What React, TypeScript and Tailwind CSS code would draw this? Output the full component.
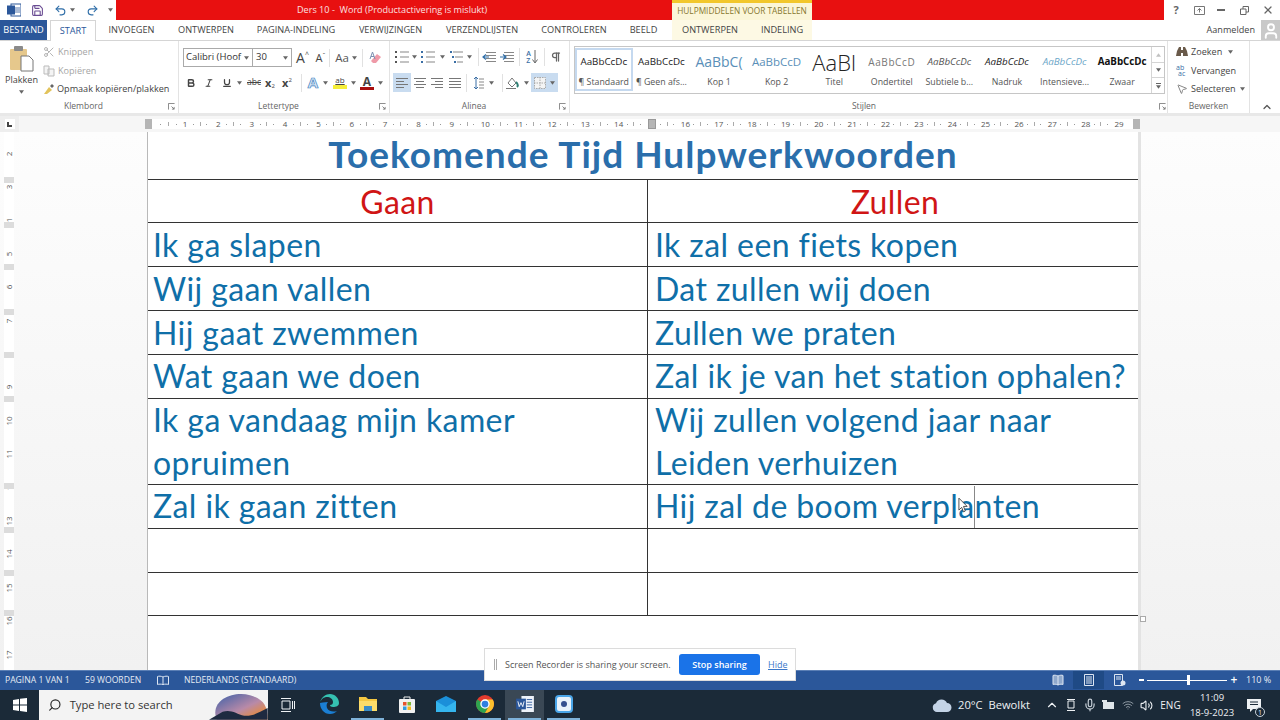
import {
  Bold,
  ChevronUp,
  Italic,
  Mic,
  MousePointer2,
  Pilcrow,
  Redo2,
  Save,
  Scissors,
  Search,
  Undo2,
  Underline,
  User,
  Volume2,
  Wifi,
  X,
} from "lucide-react";
import { ReactNode } from "react";

const ui = "font-['Open_Sans',sans-serif]";

const Caret = ({ className = "" }: { className?: string }) => (
  <svg viewBox="0 0 6 4" className={`w-[5px] h-[4px] shrink-0 ${className}`}>
    <path d="M0 0h6L3 4z" fill="#666" />
  </svg>
);

const Launcher = () => (
  <svg viewBox="0 0 8 8" className="w-[7px] h-[7px]">
    <path d="M.5 7.5v-7h7M4 4l3 3M7 4.5V7H4.5" fill="none" stroke="#777" strokeWidth="1" />
  </svg>
);

const Lines = ({ kind }: { kind: "left" | "center" | "right" | "full" }) => {
  const rows = [12, 8, 12, 8];
  return (
    <svg viewBox="0 0 12 10" className="w-[12px] h-[10px]">
      {rows.map((w, i) => {
        const len = kind === "full" ? 12 : w;
        const x = kind === "left" || kind === "full" ? 0 : kind === "right" ? 12 - len : (12 - len) / 2;
        return <rect key={i} x={x} y={i * 3} width={len} height="1" fill="#777" />;
      })}
    </svg>
  );
};

const ListIcon = ({ marks }: { marks: "dot" | "num" | "multi" }) => (
  <svg viewBox="0 0 14 12" className="w-[14px] h-[12px]">
    {[0, 5, 10].map((y, i) => (
      <g key={y}>
        <rect x={marks === "multi" ? 1 + i * 2 : 0} y={y} width="2" height="2" fill={marks === "dot" ? "#555" : "#3a6ea5"} />
        <rect x={marks === "multi" ? 4 + i * 2 : 5} y={y + 0.5} width={marks === "multi" ? 10 - i * 2 : 9} height="1" fill="#888" />
      </g>
    ))}
  </svg>
);

const IndentIcon = ({ flip }: { flip?: boolean }) => (
  <svg viewBox="0 0 14 12" className="w-[14px] h-[12px]">
    {[1, 4, 7, 10].map((y) => (
      <rect key={y} x="4" y={y} width="10" height="1" fill="#888" />
    ))}
    <path d={flip ? "M0 6h6M3 3.5 6 6 3 8.5" : "M1 6h6M4 3.5 1 6l3 2.5"} fill="none" stroke="#2f6ea8" strokeWidth="1.2" />
  </svg>
);

const Sep = ({ h = "h-[18px]" }: { h?: string }) => <div className={`w-px shrink-0 ${h} bg-[#e1e1e1]`} />;

const Cell = ({ w, children, className = "" }: { w: string; children?: ReactNode; className?: string }) => (
  <div className={`${w} h-full flex items-center justify-center shrink-0 ${className}`}>{children}</div>
);

const GroupLabel = ({ label, launcher = true, pad }: { label: string; launcher?: boolean; pad: string }) => (
  <div className={`h-[13px] flex items-center justify-between ${pad} text-[8.5px] text-[#666]`}>
    <span className={`flex-1 text-center ${launcher ? "pr-[5px]" : ""}`}>{label}</span>
    {launcher && <Launcher />}
  </div>
);

const Klembord = () => (
  <div className="w-[179px] border-r border-[#e3e3e3] flex flex-col shrink-0">
    <div className="h-[59px] flex">
      <div className="w-[43px] flex flex-col items-center pt-[5px]">
        <svg viewBox="0 0 24 26" className="w-[24px] h-[26px]">
          <rect x="0" y="3" width="17" height="21" rx="1" fill="#e6c88c" />
          <rect x="4" y="0" width="9" height="5" rx="1" fill="#8a8a8a" />
          <path d="M11 10h8l4 4v11H11z" fill="#fff" stroke="#777" />
        </svg>
        <span className="text-[9.1px] text-[#444] mt-[1px] leading-[14px]">Plakken</span>
        <Caret className="mt-[3px]" />
      </div>
      <div className="flex flex-col pt-[2px] text-[9.1px] leading-[18px] whitespace-nowrap">
        <div className="h-[18.5px] flex items-center gap-[3px] text-[#a5a5a5]">
          <Scissors size={12} color="#b5b5b5" />
          Knippen
        </div>
        <div className="h-[18.5px] flex items-center gap-[3px] text-[#a5a5a5]">
          <svg viewBox="0 0 12 12" className="w-[12px] h-[12px]">
            <path d="M1 1h5v8H1zM5 4h6v7H5z" fill="#f4f4f4" stroke="#bbb" />
          </svg>
          Kopiëren
        </div>
        <div className="h-[18.5px] flex items-center gap-[2px] text-[#444]">
          <svg viewBox="0 0 12 12" className="w-[12px] h-[12px]">
            <path d="M1 11 6 4l3 3-5 4z" fill="#e2c35b" />
            <path d="m7 3 2-2 2 2-2 2z" fill="#666" />
          </svg>
          Opmaak kopiëren/plakken
        </div>
      </div>
    </div>
    <GroupLabel label="Klembord" pad="pl-[4px] pr-[3px]" />
  </div>
);

const Lettertype = () => (
  <div className="w-[211px] border-r border-[#e3e3e3] flex flex-col shrink-0">
    <div className="h-[32px] pl-[4px] pt-[1px] flex items-center">
      <div className="w-[109px] h-[19px] border border-[#aaa] flex items-center text-[9.5px] text-[#333] shrink-0">
        <div className="w-[69px] h-full border-r border-[#aaa] flex items-center pl-[2px] gap-[2px] whitespace-nowrap">
          <span className="w-[56px]">Calibri (Hoof</span>
          <Caret />
        </div>
        <div className="flex-1 flex items-center justify-between px-[3px]">
          30
          <Caret />
        </div>
      </div>
      <Cell w="w-[19px]" className="ml-[1px] text-[14px] text-[#444] leading-none">
        A<span className="text-[7px] -mt-[6px]">^</span>
      </Cell>
      <Cell w="w-[17px]" className="text-[11px] text-[#444] leading-none">
        A<span className="text-[7px] -mt-[5px]">ˇ</span>
      </Cell>
      <Sep />
      <Cell w="w-[32px]" className="text-[11.5px] text-[#555] gap-[3px]">
        Aa
        <Caret />
      </Cell>
      <Sep />
      <Cell w="w-[26px]">
        <svg viewBox="0 0 14 14" className="w-[14px] h-[14px]">
          <path d="M2 10 8 3l4 3-5 6H4z" fill="#ef9aa8" />
          <path d="M1 8 3.500 1 6 8M2 5.500h3" fill="none" stroke="#7a8fb0" />
        </svg>
      </Cell>
    </div>
    <div className="h-[19px] pl-[4px] flex items-center text-[#444]">
      <Cell w="w-[15px]"><Bold size={10} strokeWidth={3.5} /></Cell>
      <Cell w="w-[19px]" className="ml-[1px]"><Italic size={10} strokeWidth={2.5} /></Cell>
      <Cell w="w-[17px]"><Underline size={10} strokeWidth={3} /></Cell>
      <Cell w="w-[8px]"><Caret /></Cell>
      <Cell w="w-[22px]" className="text-[8.5px] line-through">abc</Cell>
      <Cell w="w-[10px]" className="text-[11px] font-bold leading-none">
        x<span className="text-[6px] font-normal mt-[6px]">2</span>
      </Cell>
      <Cell w="w-[24px]" className="text-[11px] font-bold leading-none">
        x<span className="text-[6px] font-normal -mt-[6px]">2</span>
      </Cell>
      <Cell w="w-[2px]" />
      <Sep />
      <Cell w="w-[22px]" className="text-[15px] font-bold text-[#d8e8f5] [-webkit-text-stroke:0.7px_#3a7ebf]">A</Cell>
      <Cell w="w-[2px]"><Caret /></Cell>
      <Cell w="w-[26px]" className="ml-[1px] flex-col text-[8px] leading-[8px]">
        <span className="underline">ab</span>
        <span className="w-[14px] h-[4px] bg-[#f5ee3a] mt-[1px]" />
      </Cell>
      <Cell w="w-[1px]"><Caret /></Cell>
      <Cell w="w-[26px]" className="flex-col text-[12px] leading-[11px] font-bold">
        A
        <span className="w-[14px] h-[3px] bg-[#a80f0f]" />
      </Cell>
      <Cell w="w-[1px]"><Caret /></Cell>
    </div>
    <div className="h-[8px]" />
    <GroupLabel label="Lettertype" pad="pl-[4px] pr-[3px]" />
  </div>
);

const Alinea = () => (
  <div className="w-[180px] border-r border-[#e3e3e3] flex flex-col shrink-0">
    <div className="h-[32px] pl-[4px] flex items-center">
      <Cell w="w-[16px]"><ListIcon marks="dot" /></Cell>
      <Cell w="w-[8px]"><Caret /></Cell>
      <Cell w="w-[20px]"><ListIcon marks="num" /></Cell>
      <Cell w="w-[8px]"><Caret /></Cell>
      <Cell w="w-[20px]"><ListIcon marks="multi" /></Cell>
      <Cell w="w-[6px]"><Caret /></Cell>
      <Cell w="w-[6px]" />
      <Sep />
      <Cell w="w-[20px]"><IndentIcon /></Cell>
      <Cell w="w-[16px]"><IndentIcon flip /></Cell>
      <Cell w="w-[4px]" />
      <Sep />
      <Cell w="w-[24px]" className="gap-[1px]">
        <span className="flex flex-col text-[7px] leading-[7px] text-[#3a6ea5] font-semibold">
          <span>A</span>
          <span>Z</span>
        </span>
        <svg viewBox="0 0 6 14" className="w-[6px] h-[14px]">
          <path d="M3 0v12M.5 9.5 3 13l2.5-3.5" fill="none" stroke="#666" />
        </svg>
      </Cell>
      <Sep />
      <Cell w="w-[22px]"><Pilcrow size={12} strokeWidth={2.5} color="#666" /></Cell>
    </div>
    <div className="h-[19px] pl-[3px] flex items-center">
      <Cell w="w-[18px]" className="bg-[#c9dcf0]"><Lines kind="left" /></Cell>
      <Cell w="w-[17px]"><Lines kind="center" /></Cell>
      <Cell w="w-[18px]"><Lines kind="right" /></Cell>
      <Cell w="w-[17px]"><Lines kind="full" /></Cell>
      <Cell w="w-[3px]" />
      <Sep />
      <Cell w="w-[24px]">
        <svg viewBox="0 0 10 12" className="w-[10px] h-[12px]">
          <path d="M2 0v12M0 2l2-2 2 2M0 10l2 2 2-2" fill="none" stroke="#3a6ea5" />
          <path d="M5 2h5M5 5h5M5 8h5M5 11h5" stroke="#888" />
        </svg>
      </Cell>
      <Cell w="w-[1px]"><Caret /></Cell>
      <Cell w="w-[10px]" />
      <Sep />
      <Cell w="w-[18px]">
        <svg viewBox="0 0 14 14" className="w-[14px] h-[14px]">
          <path d="M3 7 7 2l4 5-4 4z" fill="#fff" stroke="#777" />
          <path d="M11 6c2 2 2 4 1 5" fill="none" stroke="#2f7f74" strokeWidth="2" />
          <rect x="1" y="12" width="10" height="1" fill="#777" />
        </svg>
      </Cell>
      <Cell w="w-[10px]"><Caret /></Cell>
      <Cell w="w-[27px]" className="bg-[#c9dcf0] gap-[4px]">
        <svg viewBox="0 0 12 12" className="w-[12px] h-[12px]">
          <rect x="0.5" y="0.5" width="11" height="11" fill="#f4f4f4" stroke="#aaa" strokeDasharray="1.5 1" />
          <path d="M6 0v12M0 6h12" stroke="#aaa" strokeDasharray="1.5 1" />
        </svg>
        <Caret />
      </Cell>
    </div>
    <div className="h-[8px]" />
    <GroupLabel label="Alinea" pad="pl-[4px] pr-[3px]" />
  </div>
);

const styles = [
  { sample: "AaBbCcDc", label: "¶ Standaard", cls: "text-[9.8px] text-[#222]" },
  { sample: "AaBbCcDc", label: "¶ Geen afs...", cls: "text-[9.8px] text-[#222]" },
  { sample: "AaBbC(", label: "Kop 1", cls: "text-[14px] text-[#5a8fb8]" },
  { sample: "AaBbCcD", label: "Kop 2", cls: "text-[11.5px] text-[#5a8fb8]" },
  { sample: "AaBl", label: "Titel", cls: "text-[22px] text-[#222] font-light" },
  { sample: "AaBbCcD", label: "Ondertitel", cls: "text-[10px] text-[#777] tracking-[0.6px]" },
  { sample: "AaBbCcDc", label: "Subtiele b...", cls: "text-[9.8px] text-[#555] italic" },
  { sample: "AaBbCcDc", label: "Nadruk", cls: "text-[9.8px] text-[#222] italic" },
  { sample: "AaBbCcDc", label: "Intensieve...", cls: "text-[9.8px] text-[#6ca6c8] italic" },
  { sample: "AaBbCcDc", label: "Zwaar", cls: "text-[9.8px] text-[#111] font-bold" },
];

const Stijlen = () => (
  <div className="w-[598px] pl-[4px] border-r border-[#e3e3e3] flex flex-col shrink-0">
    <div className="h-[59px] pt-[5px]">
      <div className="w-[591px] h-[48px] border border-[#c6c6c6] flex">
        <div className="flex-1 flex pt-[1px]">
          {styles.map((s, i) => (
            <div
              key={i}
              className={`w-[57.6px] h-[43px] flex flex-col items-center shrink-0 ${
                i === 0 ? "border-[2px] border-[#c5d9ef]" : "border-[2px] border-transparent"
              }`}
            >
              <div className={`h-[25px] leading-[24px] w-full text-center whitespace-nowrap ${s.cls}`}>{s.sample}</div>
              <div className="h-[14px] text-[8.8px] leading-[14px] text-[#555] whitespace-nowrap">{s.label}</div>
            </div>
          ))}
        </div>
        <div className="w-[13px] border-l border-[#d5d5d5] flex flex-col">
          <div className="h-[16px] border-b border-[#d5d5d5] flex items-center justify-center">
            <Caret className="rotate-180 opacity-40" />
          </div>
          <div className="h-[15px] border-b border-[#d5d5d5] flex items-center justify-center">
            <Caret />
          </div>
          <div className="flex-1 flex flex-col items-center justify-center gap-[1px]">
            <div className="w-[5px] h-px bg-[#666]" />
            <Caret />
          </div>
        </div>
      </div>
    </div>
    <GroupLabel label="Stijlen" pad="pl-0 pr-[1px]" />
  </div>
);

const Bewerken = () => (
  <div className="w-[82px] border-r border-[#e3e3e3] flex flex-col shrink-0">
    <div className="h-[59px] pl-[8px] flex flex-col text-[9.1px] text-[#444] pt-[2px] whitespace-nowrap">
      <div className="h-[18.5px] flex items-center gap-[3px]">
        <svg viewBox="0 0 12 12" className="w-[12px] h-[12px]">
          <path d="M1 5 3 1h2v9H0zM11 5 9 1H7v9h5zM5 4h2v3H5z" fill="#6a5a4a" />
        </svg>
        Zoeken
        <Caret className="ml-[3px]" />
      </div>
      <div className="h-[18.5px] flex items-center gap-[3px]">
        <span className="w-[12px] flex flex-col text-[7px] leading-[6px] text-[#3a6ea5]">
          <span>ab</span>
          <span className="pl-[2px]">ac</span>
        </span>
        Vervangen
      </div>
      <div className="h-[18.5px] flex items-center gap-[3px]">
        <MousePointer2 size={12} color="#888" />
        Selecteren
        <Caret className="ml-[1px]" />
      </div>
    </div>
    <GroupLabel label="Bewerken" launcher={false} pad="px-[2px]" />
  </div>
);

const TitleBar = () => (
  <div className="h-[20px] flex shrink-0">
    <div className="w-[116px] flex items-center bg-white">
      <Cell w="w-[28px]">
        <svg viewBox="0 0 14 14" className="w-[14px] h-[14px]">
          <rect x="4" y="1" width="10" height="12" fill="#fff" stroke="#2b579a" />
          <rect x="0" y="2.5" width="8" height="9" fill="#2b579a" />
          <path d="M6 5h7M6 7h7M6 9h7" stroke="#2b579a" strokeWidth="0.8" />
        </svg>
      </Cell>
      <Cell w="w-[18px]"><Save size={13} color="#6a4c93" /></Cell>
      <Cell w="w-[16px]" className="ml-[6px]"><Undo2 size={13} color="#2f6ea8" /></Cell>
      <Cell w="w-[8px]"><Caret /></Cell>
      <Cell w="w-[24px]" className="ml-[4px]"><Redo2 size={13} color="#2f6ea8" /></Cell>
      <Cell w="w-[12px]"><Caret /></Cell>
    </div>
    <div className="w-[556px] bg-[#e81010] flex items-center pl-[181px] text-[9.1px] text-[#fbe0e0] whitespace-pre">
      Ders 10 -  Word (Productactivering is mislukt)
    </div>
    <div className="w-[140px] bg-[#fbf6d8] border-t-[3px] border-[#f2c72c] flex items-center justify-center text-[8.3px] text-[#86762f] whitespace-nowrap">
      HULPMIDDELEN VOOR TABELLEN
    </div>
    <div className="w-[352px] bg-[#e81010]" />
    <div className="flex-1 bg-white flex items-center text-[#666]">
      <Cell w="w-[24px]" className="text-[11px] font-bold">?</Cell>
      <Cell w="w-[22px]">
        <svg viewBox="0 0 11 9" className="w-[11px] h-[9px]">
          <path d="M.5.5h10v8H.5zM5.5 6.5v-4M3.5 4.5l2-2 2 2" fill="none" stroke="#777" />
        </svg>
      </Cell>
      <Cell w="w-[22px]"><div className="w-[8px] h-[2px] bg-[#666]" /></Cell>
      <Cell w="w-[25px]">
        <svg viewBox="0 0 9 9" className="w-[9px] h-[9px]">
          <path d="M.5 3h5.5v5.5H.5zM3 3V.5h5.5V6H6" fill="none" stroke="#666" />
        </svg>
      </Cell>
      <Cell w="w-[22px]"><X size={12} strokeWidth={2.5} /></Cell>
    </div>
  </div>
);

const tabs = [
  ["INVOEGEN", "w-[71px]"],
  ["ONTWERPEN", "w-[78px]"],
  ["PAGINA-INDELING", "w-[102px]"],
  ["VERWIJZINGEN", "w-[87px]"],
  ["VERZENDLIJSTEN", "w-[96px]"],
  ["CONTROLEREN", "w-[88px]"],
  ["BEELD", "w-[51px]"],
];

const TabBar = () => (
  <div className="h-[21px] flex shrink-0 border-b border-[#d5d5d5] text-[9.2px] text-[#444] whitespace-nowrap">
    <div className="w-[47px] h-[20px] bg-[#2b579a] text-white flex items-center justify-center">BESTAND</div>
    <div className="w-[46px] ml-[3px] h-[21px] bg-white border-x border-t border-[#d5d5d5] flex items-center justify-center text-[#2b579a]">
      START
    </div>
    {tabs.map(([t, w]) => (
      <div key={t} className={`${w} flex items-center justify-center`}>
        {t}
      </div>
    ))}
    <div className="w-[140px] ml-[3px] bg-[#fdf9e4] flex items-center pl-[10px] gap-[23px]">
      <span>ONTWERPEN</span>
      <span>INDELING</span>
    </div>
    <div className="flex-1 flex items-center justify-end">
      <span className="text-[9.1px] mr-[6px]">Aanmelden</span>
      <div className="w-[19px] h-[20px] bg-[#c9c9c9] flex items-end justify-center overflow-hidden">
        <User size={18} color="#fff" strokeWidth={2.5} />
      </div>
    </div>
  </div>
);

const HTicks = () => (
  <>
    <span className="w-px h-px bg-[#999]" />
    <span className="w-px h-[4px] bg-[#aaa]" />
    <span className="w-px h-px bg-[#999]" />
  </>
);

const hNums = Array.from({ length: 29 }, (_, i) => i + 1);

const TopRuler = () => (
  <div className="h-[16px] flex items-center bg-[#f6f6f6] shrink-0 text-[8px] text-[#555]">
    <div className="w-[19px] h-[16px] flex items-center justify-center bg-[#eeeeee]">
      <div className="w-[10px] h-[10px] bg-white flex items-center justify-center">
        <div className="w-[5px] h-[5px] border-l-2 border-b-2 border-[#444]" />
      </div>
    </div>
    <div className="w-[126px]" />
    <div className="w-[7px] h-[10px] bg-[#b5b5b5]" />
    <div className="w-[981px] h-[10px] bg-white flex items-center">
      <div className="w-[28px] shrink-0 flex items-center justify-around pl-[4px]">
        <HTicks />
      </div>
      {hNums.map((n) => (
        <div key={n} className="w-[33.36px] shrink-0 flex items-center">
          {n === 15 ? (
            <span className="w-[10px] flex justify-center">
              <span className="w-[8px] h-[10px] bg-[#b5b5b5] border border-[#999]" />
            </span>
          ) : (
            <span className="w-[10px] text-center">{n}</span>
          )}
          {n < 29 && (
            <span className="flex-1 flex items-center justify-around pr-[3px]">
              <HTicks />
            </span>
          )}
        </div>
      ))}
    </div>
    <div className="w-[7px] h-[10px] bg-[#b5b5b5]" />
  </div>
);

const vNums = ["2", "3", "1", "5", "6", "7", "", "9", "10", "11", "1", "13", "14", "15", "16", "17"];
const rowBands = [45, 90, 132, 177, 220, 264, 351, 395, 438, 478];

const SideRuler = () => (
  <div className="relative w-[19px] shrink-0 pl-[4px] h-full">
    <div className="w-[10px] h-full bg-white flex flex-col items-center overflow-hidden text-[8px] text-[#555]">
      <div className="h-[5px] shrink-0" />
      {vNums.map((n, i) => (
        <div key={i} className="h-[33.4px] shrink-0 flex items-center justify-center">
          <span className="-rotate-90">{n}</span>
        </div>
      ))}
    </div>
    {rowBands.map((t) => (
      <div key={t} className="absolute left-[4px] w-[10px] h-[6px] bg-[#dcdcdc]" style={{ top: t }} />
    ))}
  </div>
);

const Row = ({
  h,
  left,
  right,
  center,
  tight,
  color = "text-[#0f6fa8]",
}: {
  h: string;
  left?: ReactNode;
  right?: ReactNode;
  center?: boolean;
  tight?: boolean;
  color?: string;
}) => (
  <div
    className={`${h} flex border-b border-[#333] ${color} text-[32px] ${
      tight ? "leading-[42.5px]" : "leading-[43.5px]"
    } tracking-[0.4px] whitespace-nowrap shrink-0`}
  >
    <div className={`w-[500px] border-r border-[#333] ${center ? "text-center" : "pl-[5px]"}`}>{left}</div>
    <div className={`flex-1 ${center ? "text-center pl-[4px]" : "pl-[7px]"}`}>{right}</div>
  </div>
);

const Page = () => (
  <div className="w-[991px] h-full bg-white border-l border-[#b9b9b9] font-['Lato',sans-serif] overflow-hidden shrink-0">
    <div className="h-[48px] pb-[2px] leading-[44px] border-b border-[#333] text-center text-[37px] font-bold text-[#2a6eab] tracking-[1px] whitespace-nowrap shrink-0">
      Toekomende Tijd Hulpwerkwoorden
    </div>
    <Row h="h-[43px]" center color="text-[#d01515]" left="Gaan" right="Zullen" />
    <Row h="h-[44px]" left="Ik ga slapen" right="Ik zal een fiets kopen" />
    <Row h="h-[44px]" left="Wij gaan vallen" right="Dat zullen wij doen" />
    <Row h="h-[44px]" left="Hij gaat zwemmen" right="Zullen we praten" />
    <Row h="h-[44px]" tight left="Wat gaan we doen" right="Zal ik je van het station ophalen?" />
    <Row
      h="h-[86px]"
      tight
      left={
        <>
          Ik ga vandaag mijn kamer
          <br />
          opruimen
        </>
      }
      right={
        <>
          Wij zullen volgend jaar naar
          <br />
          Leiden verhuizen
        </>
      }
    />
    <Row h="h-[44px]" tight left="Zal ik gaan zitten" right="Hij zal de boom verplanten" />
    <Row h="h-[44px]" />
    <Row h="h-[43px]" />
  </div>
);

const RecorderBar = () => (
  <div className={`absolute left-[484px] top-[648px] w-[312px] h-[33px] bg-white border border-[#dcdcdc] flex items-center pl-[9px] text-[9px] text-[#555] ${ui}`}>
    <span className="w-[3px] h-[11px] border-x border-[#aaa]" />
    <span className="ml-[8px] w-[166px] whitespace-nowrap">Screen Recorder is sharing your screen.</span>
    <div className="ml-[8px] w-[81px] h-[21px] bg-[#1a73e8] rounded-[3px] text-white font-semibold flex items-center justify-center">
      Stop sharing
    </div>
    <span className="ml-[8px] text-[#3b78c9] underline">Hide</span>
  </div>
);

const StatusBar = () => (
  <div className="h-[20px] pb-px bg-[#2b579a] border-t border-[#5b7fb5] flex items-center text-[8.6px] text-[#e6ecf5] shrink-0 whitespace-nowrap">
    <span className="ml-[5px] w-[80px]">PAGINA 1 VAN 1</span>
    <span className="w-[72px]">59 WOORDEN</span>
    <svg viewBox="0 0 12 10" className="w-[12px] h-[10px]">
      <path d="M6 2C4 1 2 1 .5 1.5v8C2 9 4 9 6 9.5 8 9 10 9 11.5 9.5v-8C10 1 8 1 6 2zM6 2v7.5" fill="none" stroke="#dde6f2" />
    </svg>
    <span className="ml-[15px]">NEDERLANDS (STANDAARD)</span>
    <div className="flex-1" />
    <Cell w="w-[31px]">
      <svg viewBox="0 0 12 12" className="w-[12px] h-[12px]">
        <path d="M6 2C4 1 2 1 1 1.5v9c1-.5 3-.5 5 .5 2-1 4-1 5-.5v-9C10 1 8 1 6 2zM6 2v9" fill="#8fa8cc" stroke="#dde6f2" />
      </svg>
    </Cell>
    <Cell w="w-[31px]" className="bg-[#1f4a85]">
      <svg viewBox="0 0 10 12" className="w-[10px] h-[12px]">
        <path d="M.5.5h9v11h-9zM2 3h6M2 5h6M2 7h6M2 9h6" fill="none" stroke="#dde6f2" />
      </svg>
    </Cell>
    <Cell w="w-[31px]">
      <svg viewBox="0 0 12 12" className="w-[12px] h-[12px]">
        <path d="M.5.5h8v11h-8zM2 3h5M2 5h5" fill="none" stroke="#dde6f2" />
        <circle cx="9" cy="9" r="2.5" fill="#dde6f2" />
      </svg>
    </Cell>
    <span className="w-[5px] h-[2px] bg-white ml-[4px]" />
    <div className="w-[80px] mx-[3px] h-px bg-white flex items-center pl-[40px]">
      <span className="w-[3px] h-[10px] bg-white" />
    </div>
    <span className="text-[12px] font-semibold text-white w-[8px] text-center">+</span>
    <span className="ml-[8px] w-[34px] text-[9px]">110 %</span>
  </div>
);

const TaskIcon = ({ active, under, className = "", children }: { active?: boolean; under?: boolean; className?: string; children: ReactNode }) => (
  <div className={`w-[39px] h-[30px] flex flex-col items-center shrink-0 ${active ? "bg-[#3a4855]" : ""} ${className}`}>
    <div className="flex-1 flex items-center justify-center">{children}</div>
    <div className={`w-[33px] h-[2px] ${under ? "bg-[#7fb2d9]" : ""}`} />
  </div>
);

const Taskbar = () => (
  <div className="h-[30px] bg-[#1b2a38] flex items-center shrink-0 text-[#eef1f4] whitespace-nowrap">
    <Cell w="w-[39px]">
      <svg viewBox="0 0 14 14" className="w-[14px] h-[14px]">
        <path d="M0 2l6-1v5.500H0zM7 .8 14 0v6.500H7zM0 7.500h6V13l-6-1zM7 7.500h7V14l-7-1z" fill="#fff" />
      </svg>
    </Cell>
    <div className="w-[229px] h-[30px] bg-[#f3f3f3] flex items-center pl-[9px] text-[11.2px] text-[#333]">
      <Search size={14} color="#222" className="-scale-x-100" />
      <span className="ml-[8px] w-[143px]">Type here to search</span>
      <svg viewBox="0 0 60 30" className="w-[60px] h-[30px]">
        <defs>
          <linearGradient id="dusk" x1="0" x2="1" y1="0" y2="1">
            <stop offset="0" stopColor="#3a5fa8" />
            <stop offset="0.55" stopColor="#b88aa8" />
            <stop offset="0.8" stopColor="#e08a4a" />
          </linearGradient>
        </defs>
        <path d="M8 30C0 10 25 0 42 5 55 9 60 15 60 30z" fill="url(#dusk)" />
        <path d="M0 30 14 22c8-3 14 2 22 4 8 1 16-4 24-8v12z" fill="#1e2a40" />
      </svg>
    </div>
    <Cell w="w-[39px]">
      <svg viewBox="0 0 14 14" className="w-[14px] h-[14px]">
        <path d="M1 3h8v8H1zM0 .5h10M0 13.500h10M11.500 3v8M13.500 3v8" fill="none" stroke="#eef1f4" />
      </svg>
    </Cell>
    <div className="w-[2px]" />
    <TaskIcon>
      <svg viewBox="0 0 20 20" className="w-[20px] h-[20px]">
        <path d="M1 9C2 3 7 0 11 0c5 0 9 4 9 9 0 3-3 4-6 4-2 0-3-1-3-2 2 0 3-1 3-3 0-3-3-5-6-5S2 5 1 9z" fill="#35c1b1" />
        <path d="M1 9c0 6 4 11 10 11 3 0 5-1 7-3-3 1-8 1-10-3-1-3 0-5 1-6-4 0-7 1-8 1z" fill="#1b7fd4" />
      </svg>
    </TaskIcon>
    <TaskIcon under>
      <svg viewBox="0 0 18 16" className="w-[18px] h-[16px]">
        <path d="M0 1h7l2 2h9v12H0z" fill="#f5c842" />
        <rect x="0" y="5" width="18" height="10" fill="#fcdc6a" />
        <rect x="5" y="10" width="8" height="5" fill="#3a8cc8" />
      </svg>
    </TaskIcon>
    <TaskIcon>
      <svg viewBox="0 0 16 18" className="w-[16px] h-[18px]">
        <path d="M5 4V2h6v2" fill="none" stroke="#eee" />
        <rect x="0" y="4" width="16" height="14" rx="1" fill="#f1f1f1" />
        <rect x="4" y="7" width="3.500" height="3.500" fill="#e5532d" />
        <rect x="8.500" y="7" width="3.500" height="3.500" fill="#7db93a" />
        <rect x="4" y="11.500" width="3.500" height="3.500" fill="#2f9be0" />
        <rect x="8.500" y="11.500" width="3.500" height="3.500" fill="#f5b91f" />
      </svg>
    </TaskIcon>
    <TaskIcon>
      <svg viewBox="0 0 20 16" className="w-[20px] h-[16px]">
        <path d="M0 5 10 0l10 5v11H0z" fill="#1b8fd9" />
        <path d="M0 5l10 6 10-6v11H0z" fill="#35b5ee" />
      </svg>
    </TaskIcon>
    <TaskIcon under>
      <svg viewBox="0 0 20 20" className="w-[18px] h-[18px]">
        <circle cx="10" cy="10" r="10" fill="#e33b2e" />
        <path d="M10 10 1.340 5A10 10 0 0 0 10 20l5-8.660z" fill="#2ea44f" />
        <path d="M10 5h8.660A10 10 0 0 1 10 20l5-8.660z" fill="#fbc02d" />
        <circle cx="10" cy="10" r="4.500" fill="#2f7fe0" stroke="#fff" strokeWidth="1.500" />
      </svg>
    </TaskIcon>
    <TaskIcon active under className="ml-[1px]">
      <svg viewBox="0 0 20 18" className="w-[18px] h-[16px]">
        <rect x="6" y="0" width="14" height="18" fill="#eef3fa" />
        <path d="M12 4h6M12 7h6M12 10h6M12 13h6" stroke="#2b579a" />
        <rect x="0" y="3" width="11" height="12" fill="#2b579a" />
        <path d="m2 6 1.500 6 2-4.500 2 4.500L9 6" fill="none" stroke="#fff" />
      </svg>
    </TaskIcon>
    <TaskIcon under>
      <svg viewBox="0 0 18 18" className="w-[18px] h-[18px]">
        <rect x="1" y="1" width="16" height="16" rx="3" fill="#e8f2fb" stroke="#4aa5e8" strokeWidth="2" />
        <circle cx="9" cy="9" r="3" fill="#34508f" />
      </svg>
    </TaskIcon>
    <div className="flex-1" />
    <svg viewBox="0 0 20 14" className="w-[20px] h-[14px]">
      <path d="M5 14a4.500 4.500 0 0 1-1-8.800A6 6 0 0 1 15 5a4.500 4.500 0 0 1 0 9z" fill="#c3d3e6" />
    </svg>
    <span className="ml-[6px] w-[87px] text-[11.2px]">20°C&nbsp; Bewolkt</span>
    <Cell w="w-[14px]"><ChevronUp size={14} /></Cell>
    <Cell w="w-[24px]">
      <svg viewBox="0 0 10 14" className="w-[10px] h-[14px]">
        <path d="M2 3h6v7H2zM1 1.500h8M1 12.500h8" fill="none" stroke="#eef1f4" />
      </svg>
    </Cell>
    <Cell w="w-[14px]"><Mic size={14} color="#c9d2da" /></Cell>
    <Cell w="w-[24px]">
      <svg viewBox="0 0 14 10" className="w-[14px] h-[10px]">
        <rect x="1" y="2" width="11" height="7" fill="#dfe5ea" />
        <rect x="0" y="0" width="5" height="2" fill="#dfe5ea" />
      </svg>
    </Cell>
    <Cell w="w-[14px]"><Wifi size={12} color="#8c97a1" /></Cell>
    <Cell w="w-[22px]"><Volume2 size={13} /></Cell>
    <span className="w-[27px] text-[10px] text-center">ENG</span>
    <div className={`w-[46px] ml-[5px] flex flex-col items-center text-[9.5px] leading-[15px] ${ui}`}>
      <span>11:09</span>
      <span>18-9-2023</span>
    </div>
    <Cell w="w-[35px]" className="ml-[1px] relative">
      <svg viewBox="0 0 14 13" className="w-[14px] h-[13px]">
        <path d="M0 0h14v10H6l-3 3v-3H0z" fill="#eef1f4" />
        <path d="M3 3h8M3 5.500h8" stroke="#1b2a38" />
      </svg>
      <span className="absolute right-[6px] bottom-[3px] w-[10px] h-[10px] rounded-full border border-[#c9d2da] bg-[#1b2a38] text-[7px] leading-[9px] text-center">
        1
      </span>
    </Cell>
    <div className="w-[9px]" />
  </div>
);

export default function App() {
  return (
    <div className={`relative w-[1280px] h-[720px] overflow-hidden bg-white flex flex-col ${ui}`}>
      <TitleBar />
      <TabBar />
      <div className="h-[72px] flex shrink-0 bg-white">
        <Klembord />
        <Lettertype />
        <Alinea />
        <Stijlen />
        <Bewerken />
        <div className="flex-1 flex items-end justify-end pr-[7px]">
          <ChevronUp size={12} color="#555" strokeWidth={2.5} />
        </div>
      </div>
      <div className="h-[3px] bg-[#e8e8e8] shrink-0" />
      <TopRuler />
      <div className="flex-1 min-h-0 flex bg-linear-to-b from-[#fdfdfd] to-[#f1f1f1]">
        <SideRuler />
        <div className="w-[128px] shrink-0" />
        <Page />
        <div className="w-[3px] bg-[#e3e3e3] shrink-0" />
      </div>
      <StatusBar />
      <Taskbar />
      <RecorderBar />
      <div className="absolute left-[974px] top-[486px] w-px h-[42px] bg-[#888]" />
      <svg viewBox="0 0 12 18" className="absolute left-[958px] top-[497px] w-[11px] h-[17px]">
        <path d="M1 1v13l3-3 2 5 2-1-2-5h4z" fill="#fff" stroke="#444" />
      </svg>
      <div className="absolute left-[1140px] top-[616px] w-[6px] h-[6px] border border-[#aaa] bg-white" />
    </div>
  );
}
